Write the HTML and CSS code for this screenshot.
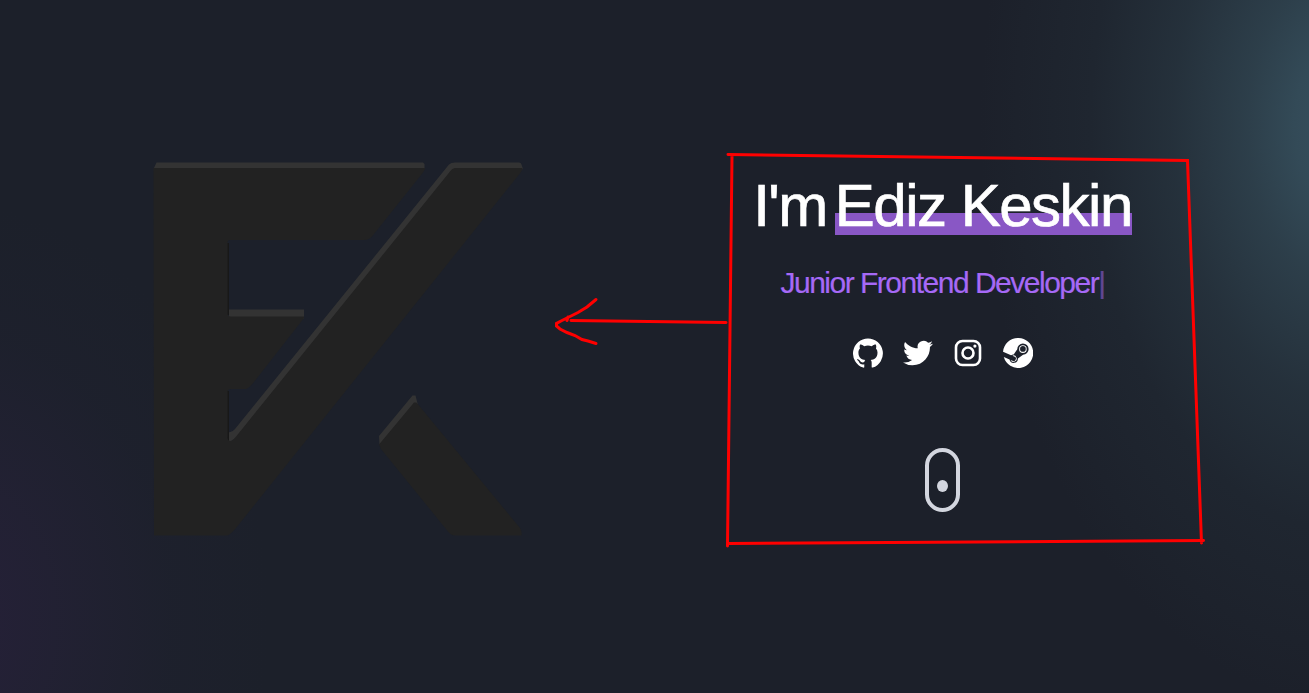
FILE: index.html
```html
<!DOCTYPE html>
<html lang="en">
<head>
    <meta charset="UTF-8">
    <meta name="viewport" content="width=device-width, initial-scale=1.0">
    <title>Ediz Keskin</title>
    <link rel="stylesheet" href="styles.css">
</head>
<body>
    <main class="hero">
        <div class="logo">
            <svg width="372" height="376" viewBox="152 161 372 376">
                <!-- lit edges -->
                <path class="edge" d="M154 168l2.500-5.500H423l1.500 1.500v5zM229 309.500h75v9h-75zM449 164.500q2-2 6-2h64q2 0 2.500 2l1.500 4.500-60 20L240 436l-9 5h-3v-9q4 1 7-3zM379 436l33.500-40.500h3l1 4 2 8-30 34-9 3z"/>
                <path class="shade" d="M227 243h2v72h-2zM227 391h2v50h-2z"/>
                <!-- front face -->
                <path class="face" d="M153.500 168H425q0 2-2 4.500L374 234q-4 6-10 6H230q-2.500 0-2.500 3v70q0 3.500 3 3.500H304v1.500l-50 64q-5 6-8 7h-15q-3.500 0-3.500 3v45q0 4 3 4 2 0 6-5L448 174q4-6 7-6h67.500q0 2-3 6L240 523q-9 12-13 12.500h-73zM379 444.500 414 402.500h2.500L520 528q2 3 1.500 7.500H455q-4 0-7-4L381 449z"/>
            </svg>
        </div>
        <div class="intro">
            <h1><span>I'm</span><span class="name">Ediz Keskin</span></h1>
            <p class="job">Junior Frontend Developer<span class="cursor">|</span></p>
            <div class="socials">
                <a href="#" aria-label="GitHub">
                    <svg viewBox="0 0 24 24"><path d="M12 .3a12 12 0 0 0-3.800 23.380c.6.120.83-.26.83-.57L9 21.070c-3.340.72-4.040-1.610-4.040-1.610-.55-1.390-1.340-1.760-1.340-1.760-1.080-.74.090-.73.090-.73 1.200.09 1.830 1.240 1.830 1.240 1.080 1.830 2.810 1.300 3.500 1 .1-.78.420-1.310.76-1.610-2.670-.3-5.470-1.330-5.470-5.930 0-1.310.47-2.380 1.240-3.220-.14-.3-.54-1.520.1-3.180 0 0 1-.32 3.300 1.230a11.500 11.500 0 0 1 6 0c2.280-1.550 3.290-1.230 3.290-1.230.64 1.660.24 2.880.12 3.180a4.650 4.650 0 0 1 1.230 3.220c0 4.610-2.800 5.630-5.480 5.920.42.36.81 1.100.81 2.220l-.01 3.290c0 .31.200.69.820.57A12 12 0 0 0 12 .3"/></svg>
                </a>
                <a href="#" aria-label="Twitter">
                    <svg viewBox="0 0 24 24"><path d="M23.950 4.570a10 10 0 0 1-2.820.77 4.960 4.960 0 0 0 2.160-2.720c-.95.550-2 .96-3.130 1.180a4.920 4.920 0 0 0-8.380 4.480C7.690 8.100 4.070 6.130 1.640 3.160a4.820 4.820 0 0 0-.67 2.480c0 1.710.87 3.210 2.190 4.100a4.900 4.900 0 0 1-2.230-.62v.06a4.920 4.920 0 0 0 3.950 4.830 5 5 0 0 1-2.210.08 4.940 4.940 0 0 0 4.600 3.420A9.870 9.870 0 0 1 0 19.540a13.990 13.990 0 0 0 7.550 2.210c9.050 0 14-7.500 14-13.980 0-.21 0-.42-.02-.63a9.940 9.940 0 0 0 2.460-2.550z"/></svg>
                </a>
                <a href="#" aria-label="Instagram">
                    <svg class="outline" viewBox="0 0 30 30"><rect x="3" y="3" width="24" height="24" rx="6.500"/><circle cx="15" cy="15" r="5.500"/><circle class="dot" cx="21.900" cy="8.100" r="1.600"/></svg>
                </a>
                <a href="#" aria-label="Steam">
                    <svg viewBox="0 0 24 24"><path d="M11.980 0C5.670 0 .5 4.860.02 11.040l6.430 2.660a3.390 3.390 0 0 1 2.100-.59l2.860-4.140v-.06a4.530 4.530 0 1 1 4.640 4.530l-4.080 2.910a3.400 3.400 0 0 1-6.730.81L.63 15.260A12 12 0 1 0 11.980 0zM7.540 18.210l-1.470-.61a2.550 2.550 0 1 0 1.400-3.470l1.520.63a1.880 1.880 0 1 1-1.450 3.450zM18.950 8.910a3.020 3.020 0 1 0-6.040 0 3.020 3.020 0 0 0 6.040 0zm-5.280 0a2.270 2.270 0 1 1 4.530 0 2.270 2.270 0 0 1-4.530 0z"/></svg>
                </a>
            </div>
            <a class="scroll" href="#about" aria-label="Scroll down"><span></span></a>
        </div>
    </main>

    <!-- hand drawn frame and arrow -->
    <svg class="marker" width="1309" height="693" viewBox="0 0 1309 693">
        <path d="M728 154.500 1187.500 160.500 1201.500 543M732 156 727.500 546M728 543.500 1203.500 540.500M726 322.500 571 320.500"/>
        <path d="M596 299.500 587 307 578 312.500 569 317 561 321 556.500 323.500V326L560 329 567 332.500 575 335.500 582 339.500 588 341 596 343.500M567 320.500 568 317"/>
    </svg>
</body>
</html>
```

FILE: styles.css
```css
* {
    box-sizing: border-box;
}
body, html {
    margin: 0;
    padding: 0;
    height: 100%;
    overflow: hidden;
}
body {
    background:
        radial-gradient(ellipse 370px 580px at 1350px 125px, #385160 0%, #334a57 15%, rgba(49, 70, 82, 0.8) 28%, rgba(44, 62, 73, 0.55) 48%, rgba(38, 52, 62, 0.3) 70%, rgba(28, 32, 42, 0) 100%),
        radial-gradient(ellipse 330px 420px at -60px 620px, #262039 0%, rgba(36, 33, 54, 0.75) 35%, rgba(32, 33, 50, 0.3) 70%, rgba(28, 32, 42, 0) 100%),
        #1c202a;
    color: white;
    font-family: "Liberation Sans", Arial, sans-serif;
}
.hero {
    display: grid;
    grid-template-columns: 604px 604px;
    padding-left: 36px;
}
.logo {
    display: flex;
    justify-content: center;
    padding-top: 161px;
}
.edge {
    fill: #333;
}
.shade {
    fill: #181818;
}
.face {
    fill: #222;
}
.intro {
    display: flex;
    flex-direction: column;
    align-items: center;
    padding-top: 175px;
    padding-left: 1px;
}
h1 {
    display: flex;
    gap: 8px;
    margin: 0;
    font-size: 60px;
    font-weight: normal;
    line-height: 62px;
    letter-spacing: -1.5px;
    -webkit-text-stroke: 0.7px white;
}
.name {
    background: linear-gradient(transparent 38px, #8957c5 38px, #8957c5 60px, transparent 60px);
}
.job {
    margin: 28px 0 0;
    font-size: 30px;
    line-height: 36px;
    letter-spacing: -1.5px;
    color: #a669f6;
    -webkit-text-stroke: 0.2px #a669f6;
}
.cursor {
    opacity: 0.5;
}
.socials {
    display: flex;
    gap: 20px;
    margin-top: 37px;
}
.socials a, .socials svg {
    display: block;
    width: 30px;
    height: 30px;
    fill: white;
}
.socials .outline {
    fill: none;
    stroke: white;
    stroke-width: 2.6;
}
.socials .dot {
    fill: white;
    stroke: none;
}
.scroll {
    display: flex;
    justify-content: center;
    width: 35px;
    height: 64px;
    margin-top: 80px;
    padding-top: 28px;
    border: 4px solid #d3d6df;
    border-radius: 18px;
}
.scroll span {
    width: 11px;
    height: 12px;
    border-radius: 50%;
    background: #d3d6df;
}
.marker {
    position: absolute;
    top: 0;
    left: 0;
    fill: none;
    stroke: red;
    stroke-width: 3;
    stroke-linecap: round;
    pointer-events: none;
}
```
